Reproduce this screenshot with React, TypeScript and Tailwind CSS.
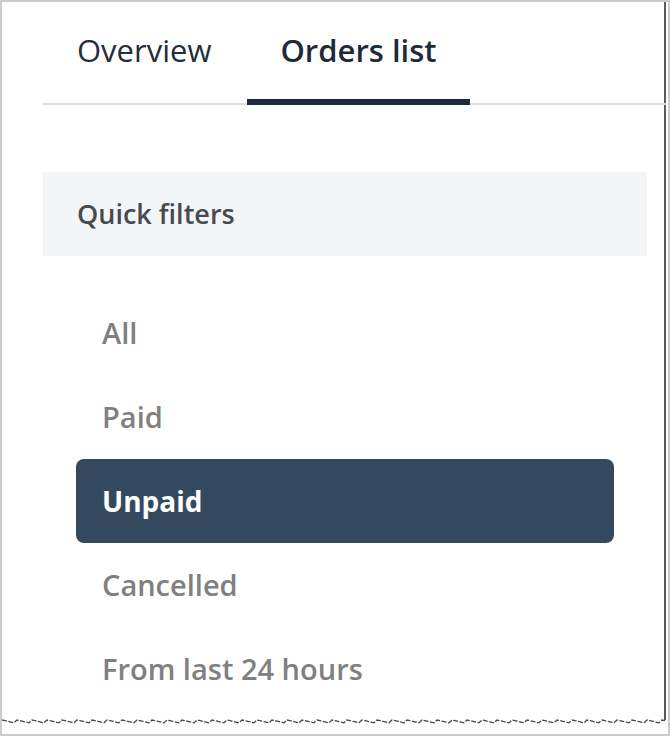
import React from "react";

const items = ["All", "Paid", "Unpaid", "Cancelled", "From last 24 hours"];

function TornEdge() {
  const pts: string[] = [];
  for (let x = 0; x <= 664; x += 3) {
    const y = 3 + (((x * 7) % 5) - 2) * 0.7 + (((x * 11) % 3) - 1) * 0.6;
    pts.push(`${x},${y.toFixed(1)}`);
  }
  return (
    <svg width="664" height="8" className="block">
      <polyline points={pts.join(" ")} fill="none" stroke="#4a4a4a" strokeWidth="1.3" strokeDasharray="5 1.5" />
    </svg>
  );
}

export default function App() {
  return (
    <div
      className="w-[670px] h-[736px] border-2 border-[#cccccc] bg-white flex flex-col"
      style={{ fontFamily: '"Open Sans", "Noto Sans", sans-serif' }}
    >
      <div className="w-[664px] h-[718px] border-r-2 border-[#5a5a5a] bg-white flex flex-col pl-[41px] shrink-0">
        <div className="flex border-b-2 border-[#dedede] mr-[-2px] h-[103px] items-stretch">
          <div className="w-[204px] flex items-start pt-[28px] pl-[34px] text-[31px] text-[#232d3b] leading-[40px]">
            Overview
          </div>
          <div className="w-[223px] flex justify-center pt-[28px] text-[31px] font-semibold text-[#1e2a3a] leading-[40px] border-b-[6px] border-[#1e2a3a] mb-[-2px]">
            Orders list
          </div>
        </div>
        <div className="mt-[67px] w-[604px] h-[84px] bg-[#f4f5f7] flex items-center pl-[34px] text-[27px] font-semibold text-[#474a4f]">
          Quick filters
        </div>
        <div className="mt-[35px] ml-[33px] w-[538px] flex flex-col">
          {items.map((t) => (
            <div
              key={t}
              className={
                t === "Unpaid"
                  ? "h-[84px] rounded-[8px] bg-[#35495e] text-white font-bold flex items-center pl-[26px] text-[28px]"
                  : "h-[84px] flex items-center pl-[26px] text-[29px] font-semibold text-[#808080]"
              }
            >
              {t}
            </div>
          ))}
        </div>
      </div>
      <div className="-mt-[1px]">
        <TornEdge />
      </div>
    </div>
  );
}
